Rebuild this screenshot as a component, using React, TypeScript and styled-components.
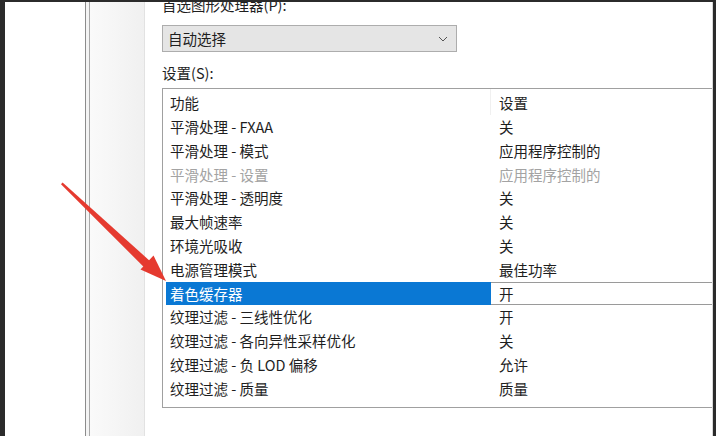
import styled, { createGlobalStyle } from "styled-components";

const GlobalStyle = createGlobalStyle`
  html, body {
    margin: 0;
    padding: 0;
    background: #ffffff;
  }
  body {
    font-family: "Noto Sans CJK SC", "Noto Sans", sans-serif;
  }
`

const Screen = styled.div`
  position: relative;
  width: 716px;
  height: 436px;
  overflow: hidden;
  display: flex;
  flex-direction: column;
  background: #ffffff;
`

const TopEdge = styled.div`
  height: 2px;
  background: #2b2b2b;
  flex-shrink: 0;
`

const Body = styled.div`
  flex: 1;
  display: flex;
  min-height: 0;
`

const DarkEdge = styled.div<{ w: number }>`
  width: ${p => p.w}px;
  background: #2b2b2b;
  flex-shrink: 0;
`

const WhiteMargin = styled.div`
  width: 80px;
  background: #ffffff;
  flex-shrink: 0;
`

const DoubleLine = styled.div`
  width: 5px;
  flex-shrink: 0;
  border-left: 1px solid #8c8c8c;
  border-right: 1px solid #a8a8a8;
  background: #f4f4f4;
  box-sizing: border-box;
`

const SidePanel = styled.div`
  width: 55px;
  flex-shrink: 0;
  background: linear-gradient(to right, #fafafa 0%, #f6f6f6 40%, #f0f0f0 100%);
  border-right: 1px solid #e2e2e2;
  box-sizing: border-box;
`

const Dialog = styled.div`
  flex: 1;
  overflow: hidden;
  padding-left: 17px;
  border-right: 1px solid #d8d8d8;
  color: #1e1e1e;
  font-size: 14.5px;
`

const Label = styled.div<{ top: number }>`
  margin-top: ${p => p.top}px;
  line-height: 20px;
  height: 20px;
  white-space: nowrap;
`

const Select = styled.div`
  margin-top: 10px;
  width: 295px;
  height: 27px;
  box-sizing: border-box;
  border: 1px solid #adadad;
  background: #e5e5e5;
  display: flex;
  align-items: center;
  justify-content: space-between;
  padding: 0 8px 0 5px;
`

const ListBox = styled.div`
  margin-top: 5px;
  width: 580px;
  height: 320px;
  box-sizing: border-box;
  border: 1px solid #a0a0a0;
  background: #ffffff;
  padding: 0 0 0 3px;
`

const HeaderRow = styled.div`
  display: grid;
  grid-template-columns: 325px 1fr;
  height: 26px;
  align-items: center;
`

const HeaderCell = styled.div<{ divider?: boolean }>`
  height: 100%;
  display: flex;
  align-items: center;
  padding-left: ${p => (p.divider ? 8 : 4)}px;
  border-left: ${p => (p.divider ? "1px solid #f0f0f0" : "none")};
  margin-left: ${p => (p.divider ? -1 : 0)}px;
`

const Row = styled.div`
  display: grid;
  grid-template-columns: 325px 1fr;
  height: 23.8px;
  align-items: stretch;
  line-height: 23.8px;
`

const NameCell = styled.div<{ selected?: boolean; muted?: boolean }>`
  padding-left: 4px;
  white-space: nowrap;
  background: ${p => (p.selected ? "#0a78d4" : "transparent")};
  color: ${p => (p.selected ? "#ffffff" : p.muted ? "#a3a3a3" : "#1e1e1e")};
`

const ValueCell = styled.div<{ selected?: boolean; muted?: boolean }>`
  padding-left: 8px;
  white-space: nowrap;
  color: ${p => (p.muted ? "#a3a3a3" : "#1e1e1e")};
  box-sizing: border-box;
  border-top: ${p => (p.selected ? "1px solid #9a9a9a" : "none")};
  border-bottom: ${p => (p.selected ? "1px solid #9a9a9a" : "none")};
  line-height: ${p => (p.selected ? "21.8px" : "23.8px")};
`

const ArrowLayer = styled.svg`
  position: absolute;
  left: 0;
  top: 0;
  pointer-events: none;
`

type Setting = {
  name: string
  value: string
  muted?: boolean
  selected?: boolean
}

const settings: Setting[] = [
  { name: "平滑处理 - FXAA", value: "关" },
  { name: "平滑处理 - 模式", value: "应用程序控制的" },
  { name: "平滑处理 - 设置", value: "应用程序控制的", muted: true },
  { name: "平滑处理 - 透明度", value: "关" },
  { name: "最大帧速率", value: "关" },
  { name: "环境光吸收", value: "关" },
  { name: "电源管理模式", value: "最佳功率" },
  { name: "着色缓存器", value: "开", selected: true },
  { name: "纹理过滤 - 三线性优化", value: "开" },
  { name: "纹理过滤 - 各向异性采样优化", value: "关" },
  { name: "纹理过滤 - 负 LOD 偏移", value: "允许" },
  { name: "纹理过滤 - 质量", value: "质量" },
]

function Chevron() {
  return (
    <svg width="10" height="6" viewBox="0 0 10 6">
      <path d="M1 1 L5 5 L9 1" fill="none" stroke="#555" strokeWidth="1" />
    </svg>
  )
}

function App() {
  return (
    <Screen>
      <GlobalStyle />
      <TopEdge />
      <Body>
        <DarkEdge w={5} />
        <WhiteMargin />
        <DoubleLine />
        <SidePanel />
        <Dialog>
          <Label top={-7}>首选图形处理器(P):</Label>
          <Select>
            <span>自动选择</span>
            <Chevron />
          </Select>
          <Label top={11}>设置(S):</Label>
          <ListBox>
            <HeaderRow>
              <HeaderCell>功能</HeaderCell>
              <HeaderCell divider>设置</HeaderCell>
            </HeaderRow>
            {settings.map((s, key) => (
              <Row key={key}>
                <NameCell selected={s.selected} muted={s.muted}>{s.name}</NameCell>
                <ValueCell selected={s.selected} muted={s.muted}>{s.value}</ValueCell>
              </Row>
            ))}
          </ListBox>
        </Dialog>
        <DarkEdge w={3} />
      </Body>
      <ArrowLayer width="716" height="436" viewBox="0 0 716 436">
        <polygon points="61,184.2 62.6,182.6 151.5,262.4 145.6,268.8" fill="#e53a2f" />
        <polygon points="166,281 140.5,269.5 153.5,255.5" fill="#e53a2f" />
      </ArrowLayer>
    </Screen>
  )
}

export default App
